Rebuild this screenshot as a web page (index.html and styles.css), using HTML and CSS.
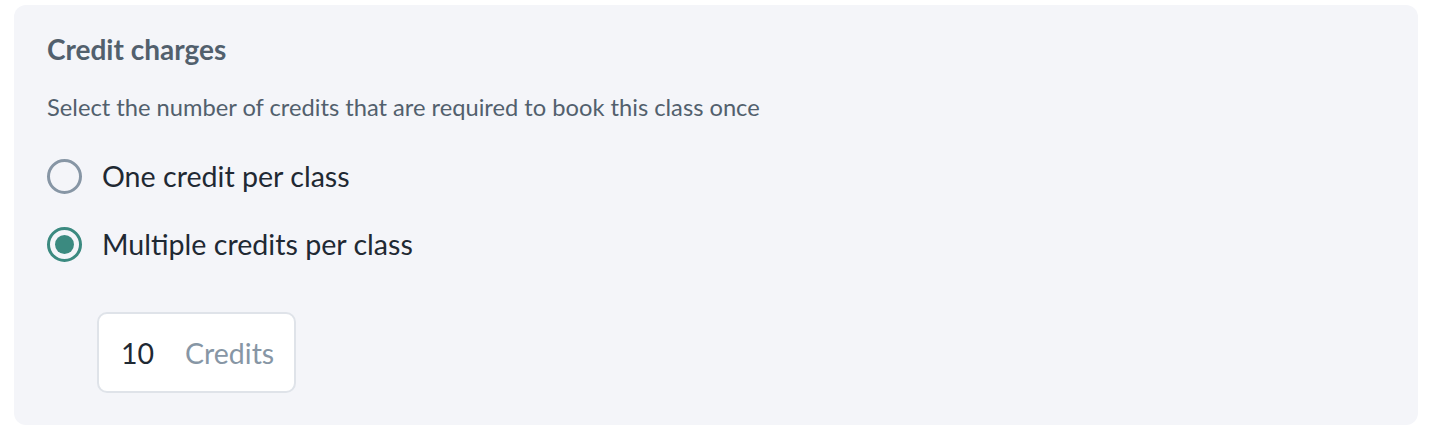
FILE: index.html
```html
<!DOCTYPE html>
<html>
<head>
<meta charset="utf-8">
<link rel="stylesheet" href="styles.css">
</head>
<body>
<section class="card">
  <h2 class="title">Credit charges</h2>
  <p class="desc">Select the number of credits that are required to book this class once</p>
  <div class="options">
    <label class="option">
      <span class="radio"></span>
      <span class="label">One credit per class</span>
    </label>
    <label class="option">
      <span class="radio checked"></span>
      <span class="label">Multiple credits per class</span>
    </label>
  </div>
  <div class="input-box">
    <span class="value">10</span>
    <span class="unit">Credits</span>
  </div>
</section>
</body>
</html>
```
FILE: styles.css
```css
html, body {
  margin: 0;
  padding: 0;
  background: #ffffff;
}
body {
  font-family: Lato, "Open Sans", sans-serif;
  padding: 5px 18px 7px 14px;
}
.card {
  background: #f4f5f9;
  border-radius: 12px;
  padding: 27px 33px 32px 33px;
  height: 420px;
  box-sizing: border-box;
}
.title {
  margin: 0;
  font-size: 28px;
  font-weight: 700;
  color: #52606d;
  line-height: 34px;
}
.desc {
  margin: 26px 0 0 0;
  font-size: 23.7px;
  line-height: 30px;
  color: #52606d;
}
.options {
  display: flex;
  flex-direction: column;
  gap: 32px;
  margin-top: 36px;
}
.option {
  display: flex;
  align-items: center;
  gap: 20px;
  height: 36px;
}
.radio {
  width: 35px;
  height: 35px;
  box-sizing: border-box;
  border: 3px solid #8796a5;
  border-radius: 50%;
  display: flex;
  align-items: center;
  justify-content: center;
}
.radio.checked {
  border-color: #3b8a80;
}
.radio.checked::after {
  content: "";
  width: 19px;
  height: 19px;
  border-radius: 50%;
  background: #3b8a80;
}
.label {
  font-size: 28.6px;
  color: #1f2933;
}
.input-box {
  margin: 50px 0 0 50px;
  width: 199px;
  height: 81px;
  box-sizing: border-box;
  background: #ffffff;
  border: 2px solid #dfe3e9;
  border-radius: 10px;
  display: flex;
  align-items: center;
  padding-left: 22px;
  gap: 31px;
  font-size: 28.5px;
}
.value {
  color: #1f2933;
}
.unit {
  color: #8796a5;
}
```
